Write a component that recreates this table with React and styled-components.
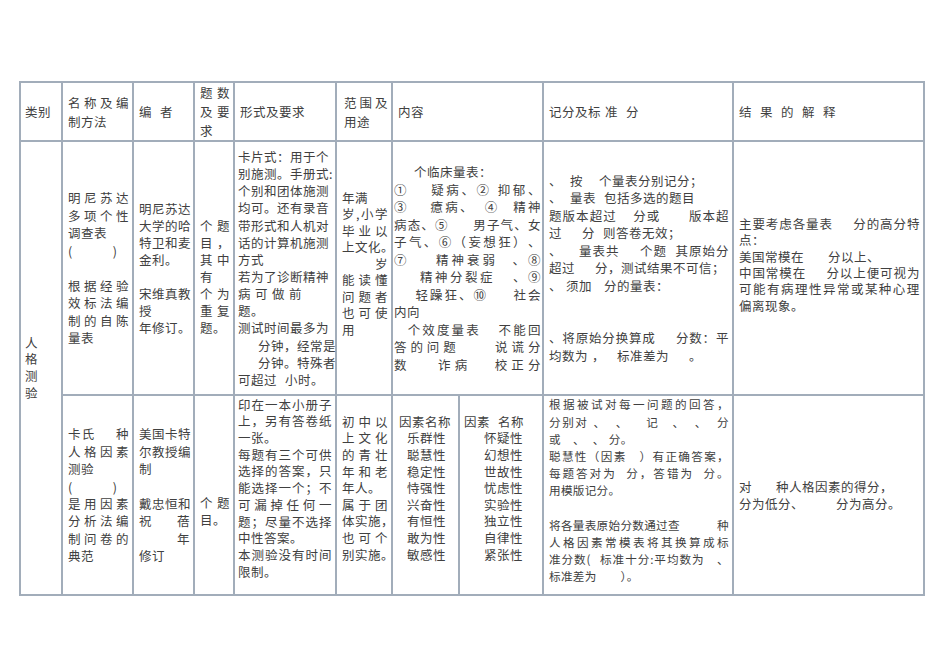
import React from 'react';
import styled, { createGlobalStyle } from 'styled-components';

const Global = createGlobalStyle`
  html, body { margin: 0; padding: 0; background: #ffffff; }
  body { font-family: "Noto Sans CJK SC", "Noto Sans", sans-serif; color: #404040; }
`;

const Page = styled.div`
  width: 950px;
  height: 672px;
  box-sizing: border-box;
  padding: 81px 0 0 19px;
  background: #ffffff;
  overflow: hidden;
`;

const Table = styled.table`
  border-collapse: collapse;
  table-layout: fixed;
  width: 906px;
`;

const Row = styled.tr`
  height: ${(p) => p.$h}px;
`;

const Cell = styled.td`
  border: 2px solid #a2adba;
  padding: ${(p) => p.$pt ?? 0}px ${(p) => p.$pr ?? 3}px ${(p) => p.$pb ?? 0}px ${(p) => p.$pl ?? 5}px;
  vertical-align: ${(p) => p.$va || 'middle'};
  font-size: ${(p) => p.$fs ?? 12.5}px;
  letter-spacing: ${(p) => p.$ls ?? 0.5}px;
  line-height: ${(p) => p.$lh ?? 17.2}px;
  overflow: visible;
`;

const Line = styled.div`
  display: flex;
  justify-content: ${(p) =>
    p.$mode === 'spread' || p.$mode === 'seg'
      ? 'space-between'
      : p.$mode === 'right'
      ? 'flex-end'
      : 'flex-start'};
  white-space: pre;
`;

const Ch = styled.span`
  flex: none;
  white-space: pre;
`;

const Seg = styled.span`
  flex: none;
  display: inline-flex;
`;

const Gap = styled.span`
  flex: none;
  display: inline-block;
  width: ${(p) => p.$w}px;
`;

function runs(s) {
  return (s.match(/ +|[^ ]+/g) || []).map((t, j) =>
    t[0] === ' ' ? <Gap key={j} $w={t.length * 4} /> : <Ch key={j}>{t}</Ch>
  );
}

function TextLine({ src }) {
  if (src === '') return <Line>{'\u00a0'}</Line>;
  let mode = 'left';
  let s = src;
  if (s[0] === '~') {
    mode = 'spread';
    s = s.slice(1);
  } else if (s[0] === '>') {
    mode = 'right';
    s = s.slice(1);
  } else if (s.includes('|')) {
    mode = 'seg';
  }
  let items;
  if (mode === 'spread') {
    items = (s.match(/ +|[^ ]/gu) || []).map((t, j) =>
      t[0] === ' ' ? <Gap key={j} $w={t.length * 4} /> : <Ch key={j}>{t}</Ch>
    );
  } else if (mode === 'seg') {
    items = s.split('|').map((seg, j) => <Seg key={j}>{runs(seg)}</Seg>);
  } else {
    items = runs(s);
  }
  return <Line $mode={mode}>{items}</Line>;
}

function Lines({ l }) {
  return l.map((src, i) => <TextLine key={i} src={src} />);
}

export default function App() {
  return (
    <Page>
      <Global />
      <Table>
        <colgroup>
          <col style={{ width: 42 }} />
          <col style={{ width: 71 }} />
          <col style={{ width: 61 }} />
          <col style={{ width: 40 }} />
          <col style={{ width: 102 }} />
          <col style={{ width: 56 }} />
          <col style={{ width: 67 }} />
          <col style={{ width: 84 }} />
          <col style={{ width: 190 }} />
          <col style={{ width: 191 }} />
        </colgroup>
        <tbody>
          <Row $h={59}>
            <Cell $pl={4}><Lines l={['类别']} /></Cell>
            <Cell $lh={19}><Lines l={['~名称及编', '制方法']} /></Cell>
            <Cell><Lines l={['编  者']} /></Cell>
            <Cell $lh={19}><Lines l={['~题数', '~及要', '求']} /></Cell>
            <Cell><Lines l={['形式及要求']} /></Cell>
            <Cell $pl={7} $lh={19}><Lines l={['~范围及', '用途']} /></Cell>
            <Cell colSpan={2} $pl={5}><Lines l={['内容']} /></Cell>
            <Cell><Lines l={['记分及标 准  分']} /></Cell>
            <Cell $pl={5}><Lines l={['结  果  的  解  释']} /></Cell>
          </Row>
          <Row $h={254}>
            <Cell rowSpan={2} $pl={4} $lh={16.7}><Lines l={['人', '格', '测', '验']} /></Cell>
            <Cell $lh={17.5}>
              <Lines
                l={['~明尼苏达', '~多项个性', '调查表', '(          )', '', '~根据经验', '~效标法编', '~制的自陈', '量表']}
              />
            </Cell>
            <Cell $lh={17.1}>
              <Lines l={['明尼苏达', '大学的哈', '特卫和麦', '金利。', '', '宋维真教', '授', '年修订。']} />
            </Cell>
            <Cell $lh={17} $pt={17}>
              <Lines l={['~个题', '~目，', '~其中', '有', '~个为', '~重复', '题。']} />
            </Cell>
            <Cell $pl={3} $lh={17.15}>
              <Lines
                l={[
                  '卡片式：用于个',
                  '别施测。手册式:',
                  '个别和团体施测',
                  '均可。还有录音',
                  '带形式和人机对',
                  '话的计算机施测',
                  '方式',
                  '若为了诊断精神',
                  '病 可 做 前',
                  '题。',
                  '测试时间最多为',
                  '     分钟，经常是',
                  '     分钟。特殊者',
                  '可超过  小时。',
                ]}
              />
            </Cell>
            <Cell $lh={16.5} $pb={8}>
              <Lines l={['年满', '~岁,小学', '~毕业以', '~上文化。', '>岁', '~能读懂', '~问题者', '~也可使', '用']} />
            </Cell>
            <Cell colSpan={2} $pl={1} $pr={1} $lh={17.5}>
              <Lines
                l={[
                  '     个临床量表：',
                  '~①     疑病、② 抑郁、',
                  '~③     癔病、  ④   精神',
                  '~病态、⑤      男子气、女',
                  '~子气、⑥（妄想狂）、',
                  '~⑦      精神衰弱   、⑧',
                  '~      精神分裂症    、⑨',
                  '~     轻躁狂、⑩      社会',
                  '内向',
                  '~   个效度量表    不能回',
                  '~答的问题        说谎分',
                  '~数      诈病     校正分',
                ]}
              />
            </Cell>
            <Cell $lh={17.5}>
              <Lines
                l={[
                  '、  按    个量表分别记分；',
                  '、  量表  包括多选的题目',
                  '~题版本超过    分或       版本超',
                  '过     分  则答卷无效；',
                  '~、    量表共     个题  其原始分',
                  '超过     分，测试结果不可信；',
                  '、 须加   分的量表：',
                  '',
                  '',
                  '~、将原始分换算成     分数：平',
                  '均数为 ，   标准差为     。',
                ]}
              />
            </Cell>
            <Cell $lh={16.4} $pb={6}>
              <Lines
                l={[
                  '~主要考虑各量表     分的高分特',
                  '点：',
                  '美国常模在      分以上、',
                  '~中国常模在     分以上便可视为',
                  '~可能有病理性异常或某种心理',
                  '偏离现象。',
                ]}
              />
            </Cell>
          </Row>
          <Row $h={200}>
            <Cell $lh={17.4}>
              <Lines
                l={['~卡氏     种', '~人格因素', '测验', '(          )', '~是用因素', '~分析法编', '~制问卷的', '典范']}
              />
            </Cell>
            <Cell $lh={17.4}>
              <Lines l={['美国卡特', '尔教授编', '制', '', '戴忠恒和', '~祝蓓', '>年', '修订']} />
            </Cell>
            <Cell $lh={17} $pt={32}>
              <Lines l={['~个题', '目。']} />
            </Cell>
            <Cell $pl={3} $lh={16.7} $pb={13}>
              <Lines
                l={[
                  '~印在一本小册子',
                  '~上，另有答卷纸',
                  '一张。',
                  '~每题有三个可供',
                  '~选择的答案，只',
                  '~能选择一个；不',
                  '~可漏掉任何一',
                  '~题；尽量不选择',
                  '中性答案。',
                  '~本测验没有时间',
                  '限制。',
                ]}
              />
            </Cell>
            <Cell $lh={16.6} $pb={13}>
              <Lines l={['~初中以', '~上文化', '~的青壮', '~年和老', '年人。', '~属于团', '~体实施，', '~也可个', '~别实施。']} />
            </Cell>
            <Cell $pl={6} $lh={16.6} $pb={13}>
              <Lines l={['因素名称', '  乐群性', '  聪慧性', '  稳定性', '  恃强性', '  兴奋性', '  有恒性', '  敢为性', '  敏感性']} />
            </Cell>
            <Cell $pl={4} $lh={16.6} $pb={13}>
              <Lines
                l={['因素  名称', '     怀疑性', '     幻想性', '     世故性', '     忧虑性', '     实验性', '     独立性', '     自律性', '     紧张性']}
              />
            </Cell>
            <Cell $fs={11.6} $ls={0.3} $lh={17.2} $pb={8}>
              <Lines
                l={[
                  '~根据被试对每一问题的回答，',
                  '~分别对 、  、    记   、  、  分',
                  '或   、  、 分。',
                  '~聪慧性（因素   ）有正确答案，',
                  '~每题答对为  分，答错为  分。',
                  '用模版记分。',
                  '',
                  '将各量表原始分数通过查|种',
                  '~人格因素常模表将其换算成标',
                  '~准分数(  标准十分:平均数为   、',
                  '标准差为      ）。',
                ]}
              />
            </Cell>
            <Cell $lh={17.5}>
              <Lines l={['对      种人格因素的得分，', '分为低分、        分为高分。']} />
            </Cell>
          </Row>
        </tbody>
      </Table>
    </Page>
  );
}
